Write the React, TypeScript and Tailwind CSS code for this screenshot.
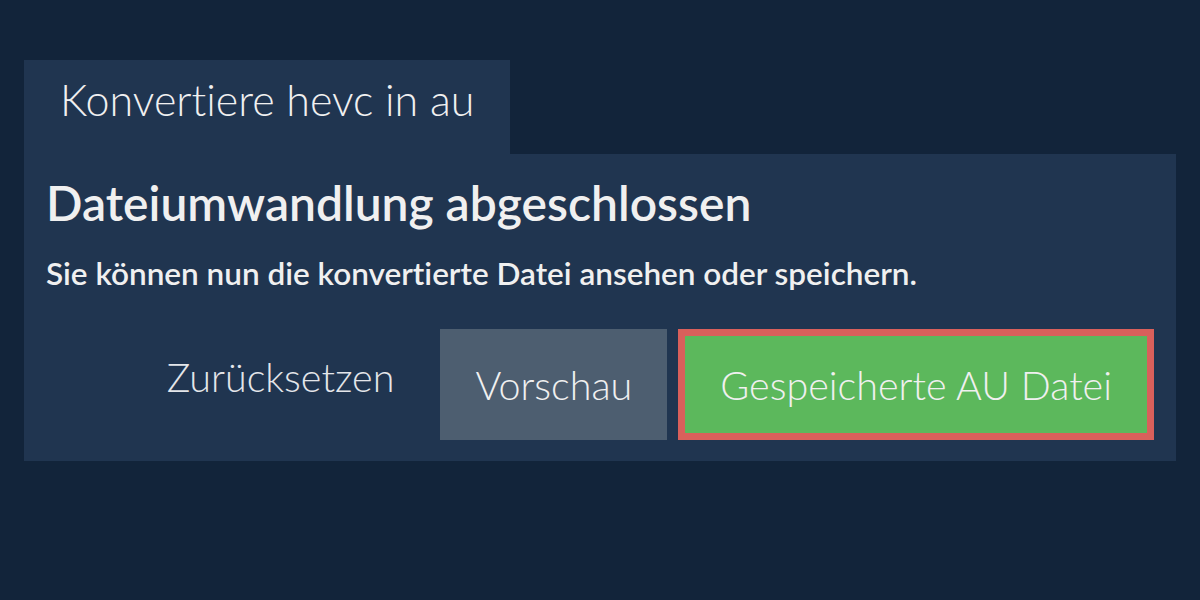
export default function App() {
  return (
    <div className="min-h-[600px] w-full bg-[#12243a] px-6 pt-[60px] font-['Lato',sans-serif] text-[#f0f0f0] [font-variant-ligatures:none]">
      <div className="flex h-[94px] w-fit items-center bg-[#203550] px-9 pb-4">
        <span className="text-[43px] font-light leading-none">Konvertiere hevc in au</span>
      </div>
      <div className="bg-[#203550] px-[22px] pb-[21px] pt-[21px]">
        <h1 className="text-[48px] font-semibold leading-[56px]">Dateiumwandlung abgeschlossen</h1>
        <p className="mt-[22px] text-[31.5px] font-semibold leading-[40px]">
          Sie können nun die konvertierte Datei ansehen oder speichern.
        </p>
        <div className="mt-[36px] flex justify-end gap-[11px]">
          <button className="h-[111px] px-[35px] pb-4 text-[39.5px] font-light text-[#e4e6ea]">Zurücksetzen</button>
          <button className="h-[111px] bg-[#4d5e70] px-[35px] text-[39.5px] font-light">Vorschau</button>
          <button className="h-[111px] border-[7px] border-[#d9605b] bg-[#5cb85c] px-[35px] text-[39.5px] font-light">
            Gespeicherte AU Datei
          </button>
        </div>
      </div>
    </div>
  )
}
